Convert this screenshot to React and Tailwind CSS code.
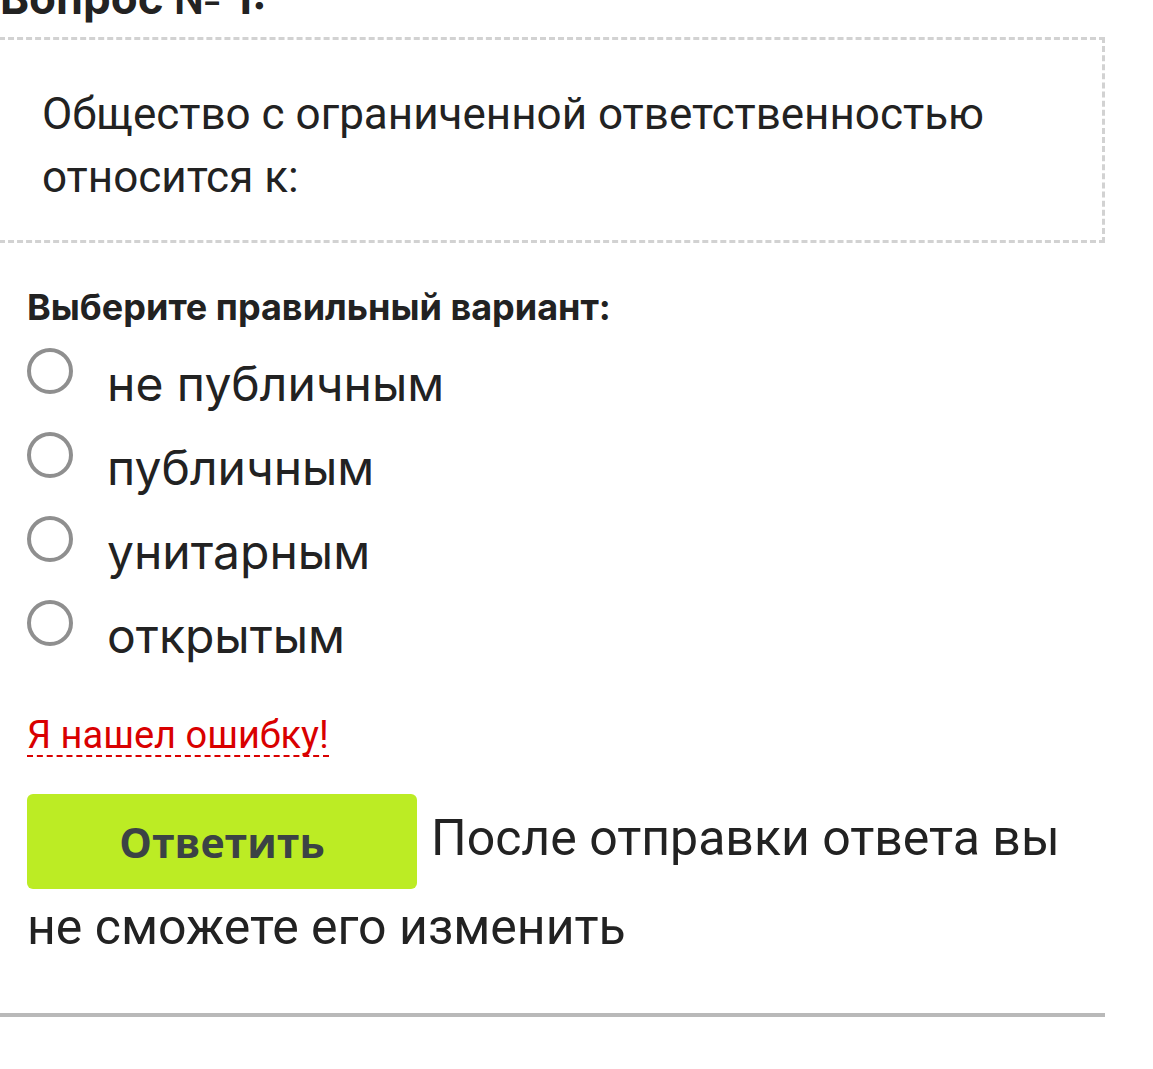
const options = ["не публичным", "публичным", "унитарным", "открытым"];

function Radio() {
  return <span className="mt-[5px] block h-[46px] w-[46px] shrink-0 rounded-full border-[4px] border-[#8f8f8f] bg-white" />;
}

export default function App() {
  return (
    <div className="min-h-[1069px] overflow-hidden bg-white text-[#222] [font-family:Roboto,'Liberation_Sans',sans-serif]">
      <div className="w-[1105px]">
        <h2 className="-mt-[28px] h-[52px] text-[44px] font-bold leading-[52px] [font-family:Inter,sans-serif]">
          Вопрос № 1:
        </h2>

        <div className="-ml-[10px] mt-[13px] border-[3px] border-dashed border-[#d2d2d2] pb-[31px] pl-[49px] pt-[43px]">
          <p className="text-[44px] leading-[63px]">
            Общество с ограниченной ответственностью относится к:
          </p>
        </div>

        <div className="pl-[27px]">
          <p className="mt-[44px] text-[36px] font-bold leading-[40px] [font-family:Inter,sans-serif]">
            Выберите правильный вариант:
          </p>

          <ul className="mt-[16px]">
            {options.map((label) => (
              <li key={label} className="flex h-[84px] items-start gap-[34px]">
                <Radio />
                <span className="-mt-[1px] text-[48px] leading-[84px] [font-family:Inter,sans-serif]">{label}</span>
              </li>
            ))}
          </ul>

          <a className="mt-[36px] inline-block border-b-[2px] border-dashed border-[#d90000] text-[38px] leading-[40px] text-[#d90000]">
            Я нашел ошибку!
          </a>

          <p className="mt-[37px] text-[50px] leading-[76px]">
            <button
              type="button"
              className="mr-[14px] inline-block h-[95px] w-[390px] rounded-[6px] bg-[#bcec24] align-middle text-[41px] font-bold text-[#3b4245] [font-family:'Open_Sans',sans-serif]"
            >
              Ответить
            </button>
            После отправки ответа вы не сможете его изменить
          </p>
        </div>

        <div className="mt-[48px] h-[4px] bg-[#b9b9b9]" />
      </div>
    </div>
  );
}
